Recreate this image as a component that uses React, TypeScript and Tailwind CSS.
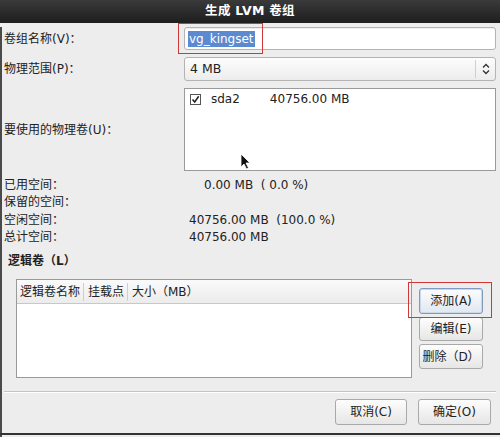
import React from "react";

const font = { fontFamily: '"DejaVu Sans", "Noto Sans CJK SC", sans-serif' };

function Btn({ label, active = false, className = "" }: { label: string; active?: boolean; className?: string }) {
  return (
    <button
      className={`flex items-center justify-center rounded-[3px] border text-[12px] text-[#222] ${
        active
          ? "border-[#7f9cc0] bg-gradient-to-b from-[#fbfcfe] to-[#e2e8f0] shadow-[inset_0_0_0_1px_#c9d7ea]"
          : "border-[#a9a9a9] bg-gradient-to-b from-[#fdfdfd] to-[#e6e6e6]"
      } ${className}`}
    >
      {label}
    </button>
  );
}

export default function App() {
  return (
    <div className="relative w-[500px] h-[437px] bg-[#ededed] text-[12px] text-[#222] overflow-hidden" style={font}>
      {/* Title bar */}
      <div className="h-[23px] bg-gradient-to-b from-[#3a3a3a] to-[#1e1e1e] flex items-center justify-center text-white font-bold text-[12.5px] tracking-wide">
        生成 LVM 卷组
      </div>

      <div className="border-l-2 border-[#4a4a4a] h-[410px] pr-[4px]">
        {/* Name */}
        <div className="flex items-center mt-[4px] h-[23px]">
          <div className="w-[182px] pl-[2px]">卷组名称(V)：</div>
          <div className="flex-1 h-full rounded-[3px] border border-[#b4b4b4] bg-white flex items-center pl-[3px] shadow-[inset_0_1px_1px_rgba(0,0,0,0.08)]">
            <span className="bg-[#5b8ad0] text-white text-[12px] leading-[16px] px-px">vg_kingset</span>
          </div>
        </div>

        {/* Extent */}
        <div className="flex items-center mt-[7px] h-[24px]">
          <div className="w-[182px] pl-[2px]">物理范围(P)：</div>
          <div className="flex-1 h-full rounded-[3px] border border-[#b4b4b4] bg-gradient-to-b from-[#fdfdfd] to-[#ececec] flex items-center">
            <span className="flex-1 pl-[5px] text-[12.5px]">4 MB</span>
            <div className="w-[20px] h-[18px] border-l border-[#cfcfcf] flex items-center justify-center">
              <svg width="8" height="12" viewBox="0 0 8 12" fill="none" stroke="#333" strokeWidth="1.3">
                <path d="M1 4.5 L4 1.5 L7 4.5" />
                <path d="M1 7.5 L4 10.5 L7 7.5" />
              </svg>
            </div>
          </div>
        </div>

        {/* Physical volumes */}
        <div className="flex items-center mt-[7px] h-[83px]">
          <div className="w-[182px] pl-[2px]">要使用的物理卷(U)：</div>
          <div className="flex-1 h-full border border-[#9a9a9a] bg-white pt-[3px] pl-[5px] relative">
            <div className="flex items-center text-[12px] h-[14px]">
              <div className="w-[11px] h-[11px] border border-[#555] bg-white flex items-center justify-center">
                <svg width="9" height="9" viewBox="0 0 9 9" fill="none" stroke="#222" strokeWidth="1.5">
                  <path d="M1.5 4.5 L3.7 7 L7.7 1.3" />
                </svg>
              </div>
              <span className="ml-[10px]">sda2</span>
              <span className="ml-[30px]">40756.00 MB</span>
            </div>
            {/* mouse cursor */}
            <svg className="absolute left-[55px] top-[64px]" width="11" height="17" viewBox="0 0 11 17">
              <path d="M1 1 L1 14 L4 11 L6.5 16 L8.5 15 L6 10 L10 10 Z" fill="#111" stroke="#fff" strokeWidth="0.8" />
            </svg>
          </div>
        </div>

        {/* Stats */}
        <div className="mt-[5px]">
          <div className="flex items-center h-[17.5px]">
            <div className="w-[187px] pl-[2px]">已用空间：</div>
            <div className="pl-[15px]">0.00 MB &nbsp;( 0.0 %)</div>
          </div>
          <div className="flex items-center h-[17.5px]">
            <div className="w-[187px] pl-[2px]">保留的空间：</div>
          </div>
          <div className="flex items-center h-[17.5px]">
            <div className="w-[187px] pl-[2px]">空闲空间：</div>
            <div>40756.00 MB &nbsp;(100.0 %)</div>
          </div>
          <div className="flex items-center h-[17.5px]">
            <div className="w-[187px] pl-[2px]">总计空间：</div>
            <div>40756.00 MB</div>
          </div>
        </div>

        {/* Logical volumes */}
        <div className="mt-[7px] h-[16px] pl-[6px] font-bold flex items-center">逻辑卷（L）</div>

        <div className="flex mt-[10px]">
          <div className="ml-[14px] w-[396px] h-[99px] border border-[#9a9a9a] bg-white">
            <div className="h-[24px] flex items-center border-b border-[#c8c8c8] bg-gradient-to-b from-[#fafafa] to-[#ececec]">
              <div className="pl-[3px] w-[67px] border-r border-[#cfcfcf]">逻辑卷名称</div>
              <div className="pl-[4px] w-[44px] border-r border-[#cfcfcf]">挂载点</div>
              <div className="pl-[4px]">大小（MB）</div>
            </div>
          </div>
          <div className="ml-[7px] flex flex-col mt-[9px] gap-[3px]">
            <Btn label="添加(A)" active className="w-[64px] h-[26px]" />
            <Btn label="编辑(E)" className="w-[64px] h-[24px]" />
            <Btn label="删除（D）" className="w-[64px] h-[25px]" />
          </div>
        </div>

        {/* Separator */}
        <div className="mt-[13px] ml-[2px] border-t border-[#c4c4c4] border-b border-b-white" />

        {/* Dialog buttons */}
        <div className="flex justify-end gap-[11px] mt-[6px] pr-[5px]">
          <Btn label="取消(C)" className="w-[72px] h-[26px]" />
          <Btn label="确定(O)" className="w-[73px] h-[26px]" />
        </div>
      </div>

      {/* Bottom frame line */}
      <div className="absolute left-0 right-0 top-[433px] h-[2px] bg-[#333]" />

      {/* Red highlight boxes */}
      <div className="absolute left-[178px] top-[23px] w-[85px] h-[31px] border border-[#d03838]" />
      <div className="absolute left-[408px] top-[282px] w-[84px] h-[36px] border border-[#d03838]" />
    </div>
  );
}
